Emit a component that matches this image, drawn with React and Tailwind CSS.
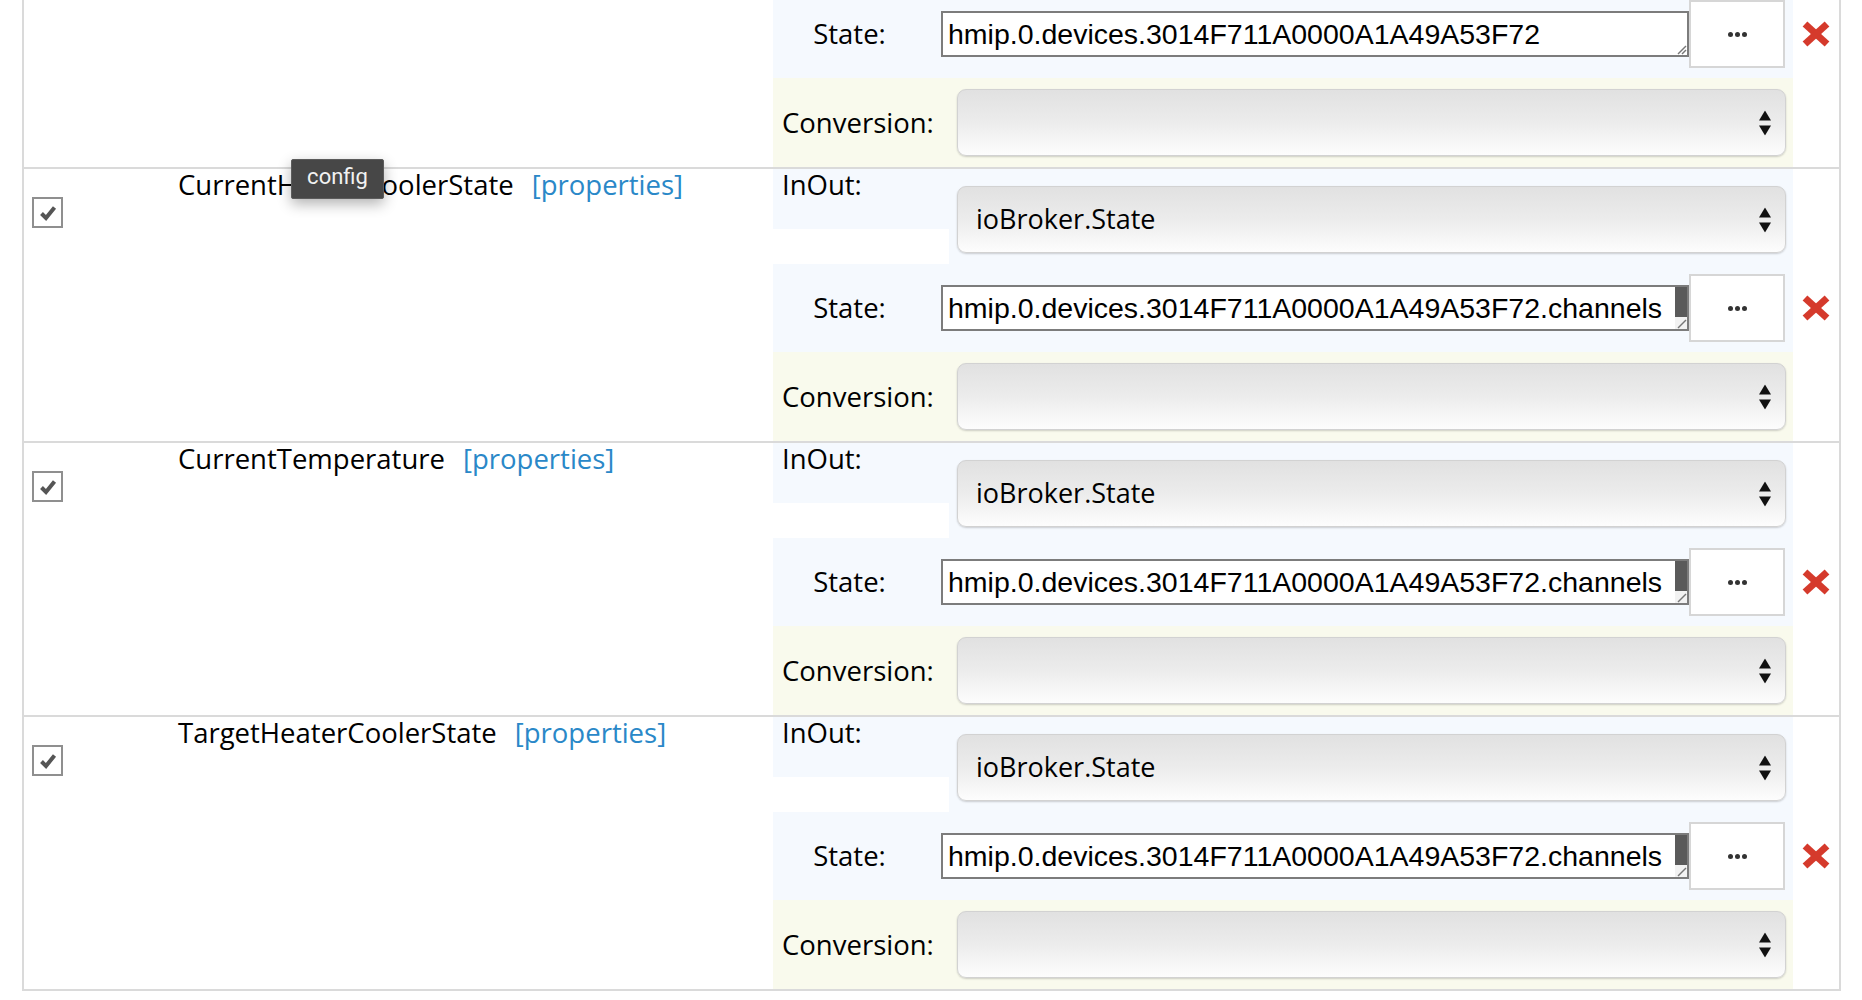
import React from "react";

const ROWS = [
  { name: "", state: "hmip.0.devices.3014F711A0000A1A49A53F72", overflow: false, cut: true },
  { name: "CurrentHeaterCoolerState", state: "hmip.0.devices.3014F711A0000A1A49A53F72.channels", overflow: true, tooltip: "config" },
  { name: "CurrentTemperature", state: "hmip.0.devices.3014F711A0000A1A49A53F72.channels", overflow: true },
  { name: "TargetHeaterCoolerState", state: "hmip.0.devices.3014F711A0000A1A49A53F72.channels", overflow: true },
];

const Arrows = () => (
  <svg width="12" height="25" viewBox="0 0 12 25" className="absolute right-[14px] top-1/2 -translate-y-1/2">
    <polygon points="6,0 12,10 0,10" fill="#111" />
    <polygon points="0,15 12,15 6,25" fill="#111" />
  </svg>
);

const Select = ({ value }) => (
  <div className="relative w-[829px] h-[67px] rounded-[9px] border border-[#d2d2d2] bg-gradient-to-b from-[#e1e1e1] via-[#ececec] to-[#fdfdfd] shadow-[0_1px_2px_rgba(0,0,0,0.18)] flex items-center pl-[18px]">
    <span className="text-[27px] text-black">{value}</span>
    <Arrows />
  </div>
);

const ResizeGrip = ({ light }) => (
  <svg width="12" height="12" viewBox="0 0 12 12" className="absolute right-0 bottom-0">
    {light && <rect width="12" height="12" fill="#f2f2f2" />}
    <line x1="3" y1="11" x2="11" y2="3" stroke="#777" strokeWidth="1.5" />
    {!light && <line x1="7" y1="11" x2="11" y2="7" stroke="#777" strokeWidth="1.5" />}
  </svg>
);

const RedX = () => (
  <svg width="30" height="28" viewBox="0 0 30 28">
    <line x1="4" y1="4" x2="26" y2="24" stroke="#d53a2c" strokeWidth="7" />
    <line x1="26" y1="4" x2="4" y2="24" stroke="#d53a2c" strokeWidth="7" />
  </svg>
);

const Checkbox = () => (
  <div className="w-[31px] h-[31px] border-2 border-[#8f8f8f] bg-white flex items-center justify-center">
    <svg width="18" height="16" viewBox="0 0 18 16">
      <path d="M2.5 8.5 L7 13 L15.5 2.5" fill="none" stroke="#555" strokeWidth="4" />
    </svg>
  </div>
);

const Row = ({ row, first, last }) => (
  <div
    className={`flex border-t-2 border-[#dadada] ${first ? "-mt-[107px]" : ""} ${last ? "border-b-2" : ""}`}
  >
    {/* left: checkbox + name */}
    <div className="relative w-[749px] flex">
      {!row.cut && (
        <>
          <div className="w-[154px] pl-[8px] pt-[28px]">
            <Checkbox />
          </div>
          <div className="leading-[32px] text-[27.5px] text-black">
            {row.name}
            <span className="ml-[18px] text-[#2a88c8]">[properties]</span>
          </div>
        </>
      )}
      {row.tooltip && (
        <div className="absolute left-[267px] -top-[10px] z-10 w-[93px] h-[40px] bg-[#474747] border border-[#5c5c5c] rounded-[2px] shadow-[0_5px_14px_rgba(0,0,0,0.3)] flex items-center justify-center font-['Roboto',sans-serif] text-[22px] text-[#f2f2f2] leading-none pb-[4px]">
          {row.tooltip}
        </div>
      )}
    </div>

    {/* right: InOut / State / Conversion */}
    <div className="flex flex-col">
      <div className="flex h-[95px]">
        <div className="w-[1020px] flex">
          <div className="w-[176px] h-[60px] bg-[#f5f9fe] pl-[9px] leading-[32px] text-[27.5px]">
            {!row.cut && "InOut:"}
          </div>
          <div className="flex-1 bg-[#f5f9fe] pl-[8px] pt-[17px]">
            {!row.cut && <Select value="ioBroker.State" />}
          </div>
        </div>
        <div className="w-[46px]" />
      </div>

      <div className="flex h-[88px]">
        <div className="w-[1020px] bg-[#f5f9fe] flex items-center">
          <div className="w-[153px] text-center text-[27.5px]">State:</div>
          <div className="ml-[15px] relative w-[748px] h-[46px] border-2 border-[#7c7c7c] bg-white flex items-center pl-[5px] overflow-hidden">
            <span className="font-['Liberation_Sans',Arial,sans-serif] text-[28.5px] text-black whitespace-nowrap">
              {row.state}
            </span>
            {row.overflow ? (
              <div className="absolute right-0 top-0 bottom-0 w-[12px] bg-[#f0f0f0]">
                <div className="h-[30px] bg-[#5a5a5a]" />
                <ResizeGrip light />
              </div>
            ) : (
              <ResizeGrip />
            )}
          </div>
          <div className="w-[96px] h-[68px] border-2 border-[#d6d6d6] bg-white flex items-center justify-center gap-[2px]">
            <span className="w-[5px] h-[5px] rounded-full bg-[#333]" />
            <span className="w-[5px] h-[5px] rounded-full bg-[#333]" />
            <span className="w-[5px] h-[5px] rounded-full bg-[#333]" />
          </div>
        </div>
        <div className="w-[46px] flex items-center justify-center">
          <RedX />
        </div>
      </div>

      <div className="flex h-[89px]">
        <div className="w-[1020px] bg-[#f9faed] flex items-center">
          <div className="w-[184px] pl-[9px] text-[27.5px]">Conversion:</div>
          <Select value="" />
        </div>
        <div className="w-[46px]" />
      </div>
    </div>
  </div>
);

export default function App() {
  return (
    <div className="w-[1862px] h-[1000px] overflow-hidden bg-white font-['Open_Sans',sans-serif] text-black">
      <div className="ml-[22px] w-[1819px] border-x-2 border-[#dadada]">
        {ROWS.map((r, i) => (
          <Row key={i} row={r} first={i === 0} last={i === ROWS.length - 1} />
        ))}
      </div>
    </div>
  );
}
